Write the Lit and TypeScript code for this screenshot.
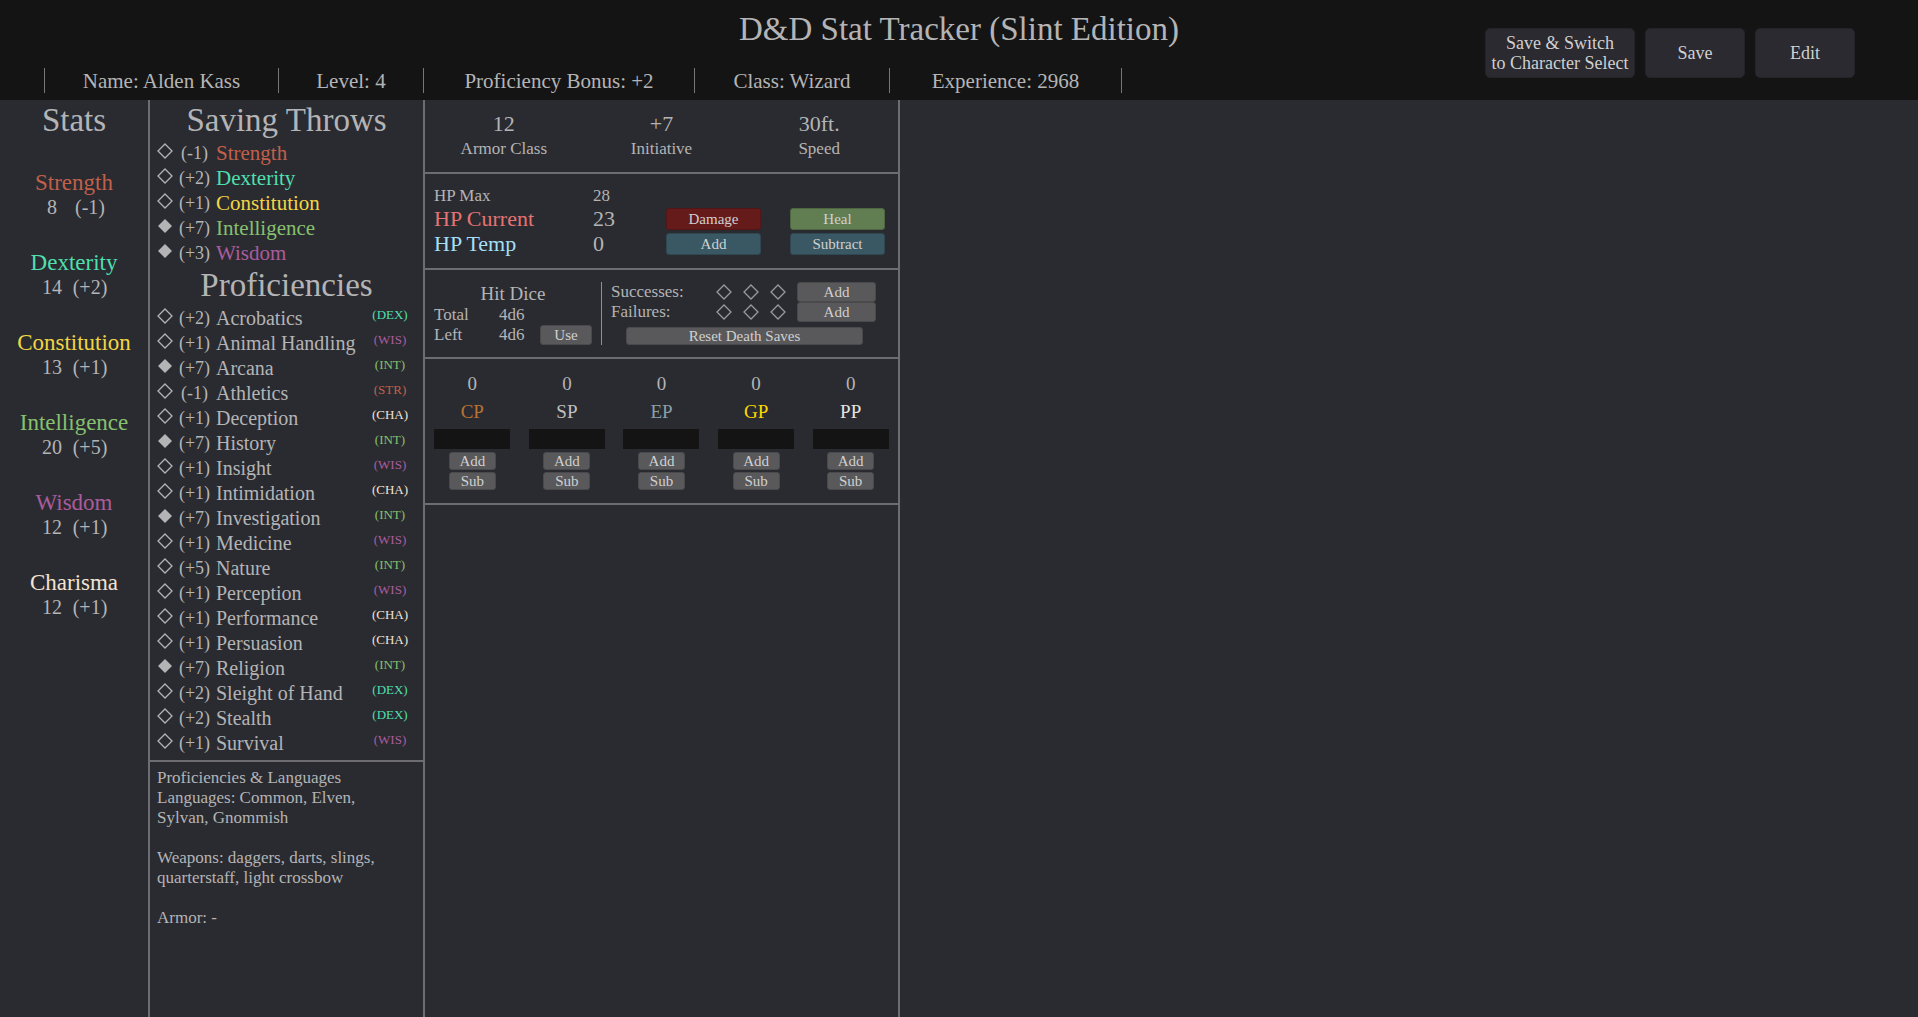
import { LitElement, html, svg, css } from "lit";
import { customElement, property } from "lit/decorators.js";

type Ability = "str" | "dex" | "con" | "int" | "wis" | "cha";

interface Stat {
  name: string;
  key: Ability;
  score: number;
  mod: string;
}

interface Check {
  name: string;
  key: Ability;
  mod: string;
  proficient?: boolean;
}

const STATS: Stat[] = [
  { name: "Strength", key: "str", score: 8, mod: "-1" },
  { name: "Dexterity", key: "dex", score: 14, mod: "+2" },
  { name: "Constitution", key: "con", score: 13, mod: "+1" },
  { name: "Intelligence", key: "int", score: 20, mod: "+5" },
  { name: "Wisdom", key: "wis", score: 12, mod: "+1" },
  { name: "Charisma", key: "cha", score: 12, mod: "+1" },
];

const SAVES: Check[] = [
  { name: "Strength", key: "str", mod: "-1" },
  { name: "Dexterity", key: "dex", mod: "+2" },
  { name: "Constitution", key: "con", mod: "+1" },
  { name: "Intelligence", key: "int", mod: "+7", proficient: true },
  { name: "Wisdom", key: "wis", mod: "+3", proficient: true },
];

const SKILLS: Check[] = [
  { name: "Acrobatics", key: "dex", mod: "+2" },
  { name: "Animal Handling", key: "wis", mod: "+1" },
  { name: "Arcana", key: "int", mod: "+7", proficient: true },
  { name: "Athletics", key: "str", mod: "-1" },
  { name: "Deception", key: "cha", mod: "+1" },
  { name: "History", key: "int", mod: "+7", proficient: true },
  { name: "Insight", key: "wis", mod: "+1" },
  { name: "Intimidation", key: "cha", mod: "+1" },
  { name: "Investigation", key: "int", mod: "+7", proficient: true },
  { name: "Medicine", key: "wis", mod: "+1" },
  { name: "Nature", key: "int", mod: "+5" },
  { name: "Perception", key: "wis", mod: "+1" },
  { name: "Performance", key: "cha", mod: "+1" },
  { name: "Persuasion", key: "cha", mod: "+1" },
  { name: "Religion", key: "int", mod: "+7", proficient: true },
  { name: "Sleight of Hand", key: "dex", mod: "+2" },
  { name: "Stealth", key: "dex", mod: "+2" },
  { name: "Survival", key: "wis", mod: "+1" },
];

const COINS = ["CP", "SP", "EP", "GP", "PP"];

const NOTES = `Proficiencies & Languages
Languages: Common, Elven,
Sylvan, Gnommish

Weapons: daggers, darts, slings,
quarterstaff, light crossbow

Armor: -`;

const diamond = (filled: boolean) => html`<svg
  class="diamond"
  width="16"
  height="16"
  viewBox="0 0 16 16"
  aria-hidden="true"
>
  ${filled
    ? svg`<path d="M8 1 L15 8 L8 15 L1 8 Z" fill="currentColor" />`
    : svg`<path d="M8 1 L15 8 L8 15 L1 8 Z" fill="none" stroke="currentColor" stroke-width="1.3" />`}
</svg>`;

const shared = css`
  * {
    box-sizing: border-box;
  }
  h1,
  h2,
  h3,
  p,
  ul {
    margin: 0;
    padding: 0;
    font-weight: 400;
    list-style: none;
  }
  button {
    padding: 0;
    border: 1px solid #4a4a4c;
    border-radius: 3px;
    background: #59595b;
    color: #d0d0d0;
    font-family: inherit;
    font-size: 15px;
    line-height: 16px;
  }
  .str { color: #c1604b; }
  .dex { color: #4fdfae; }
  .con { color: #f2d544; }
  .int { color: #86c06f; }
  .wis { color: #ab5c9d; }
  .cha { color: #f3e3d3; }
  .heading {
    font-size: 33px;
    line-height: 40px;
    text-align: center;
  }
  .diamond {
    display: block;
  }
`;

@customElement("sheet-header")
class SheetHeader extends LitElement {
  static styles = [
    shared,
    css`
      :host {
        display: grid;
        grid-template-columns: 1fr auto 1fr;
        grid-template-rows: 60px 40px;
        background: #141414;
      }
      .title {
        grid-column: 2;
        grid-row: 1;
        font-size: 33px;
        line-height: 58px;
      }
      .facts {
        grid-column: 1 / 4;
        grid-row: 2;
        display: grid;
        grid-template-columns: 234px 145px 271px 195px 233px;
        align-self: center;
        margin-left: 44px;
        font-size: 21px;
        line-height: 26px;
      }
      .fact {
        height: 25px;
        border-left: 1px solid #77777a;
        text-align: center;
      }
      .fact:last-child {
        border-right: 1px solid #77777a;
      }
      .actions {
        grid-column: 3;
        grid-row: 1 / 3;
        display: flex;
        justify-content: flex-end;
        gap: 10px;
        padding: 28px 63px 22px 0;
      }
      .action {
        width: 100px;
        border-color: #242428;
        border-radius: 5px;
        background: #2a2a30;
        font-size: 18px;
        line-height: 20px;
      }
      .wide {
        width: 150px;
      }
    `,
  ];

  render() {
    return html`
      <h1 class="title">D&amp;D Stat Tracker (Slint Edition)</h1>
      <ul class="facts">
        <li class="fact">Name: Alden Kass</li>
        <li class="fact">Level: 4</li>
        <li class="fact">Proficiency Bonus: +2</li>
        <li class="fact">Class: Wizard</li>
        <li class="fact">Experience: 2968</li>
      </ul>
      <div class="actions">
        <button class="action wide">Save &amp; Switch<br />to Character Select</button>
        <button class="action">Save</button>
        <button class="action">Edit</button>
      </div>
    `;
  }
}

@customElement("stat-list")
class StatList extends LitElement {
  static styles = [
    shared,
    css`
      :host {
        display: block;
      }
      .stats {
        display: grid;
        gap: 30px;
        padding-top: 30px;
        font-size: 23px;
        line-height: 25px;
        text-align: center;
      }
      .values {
        display: grid;
        grid-template-columns: 38px 38px;
        justify-content: center;
        padding-right: 6px;
        font-size: 20px;
      }
    `,
  ];

  render() {
    return html`
      <h2 class="heading">Stats</h2>
      <ul class="stats">
        ${STATS.map(
          (s) => html`<li>
            <div class=${s.key}>${s.name}</div>
            <div class="values"><span>${s.score}</span><span>(${s.mod})</span></div>
          </li>`,
        )}
      </ul>
    `;
  }
}

@customElement("check-list")
class CheckList extends LitElement {
  @property() heading = "";
  @property({ attribute: false }) checks: Check[] = [];
  @property({ type: Boolean }) tagged = false;

  static styles = [
    shared,
    css`
      :host {
        display: block;
      }
      .row {
        display: grid;
        grid-template-columns: 16px 43px 1fr 56px;
        align-items: center;
        height: 25px;
        padding: 0 5px 0 7px;
        font-size: 20px;
        line-height: 24px;
      }
      .diamond {
        margin-bottom: 4px;
      }
      .mod {
        font-size: 18px;
        text-align: center;
      }
      .save {
        font-size: 21px;
      }
      .tag {
        font-size: 13px;
        line-height: 20px;
        padding-bottom: 5px;
        text-align: center;
      }
    `,
  ];

  render() {
    return html`
      <h2 class="heading">${this.heading}</h2>
      <ul>
        ${this.checks.map(
          (c) => html`<li class="row">
            ${diamond(!!c.proficient)}
            <span class="mod">(${c.mod})</span>
            <span class=${this.tagged ? "name" : `save ${c.key}`}>${c.name}</span>
            ${this.tagged
              ? html`<span class="tag ${c.key}">(${c.key.toUpperCase()})</span>`
              : null}
          </li>`,
        )}
      </ul>
    `;
  }
}

@customElement("combat-panel")
class CombatPanel extends LitElement {
  static styles = [
    shared,
    css`
      :host {
        display: block;
      }
      .section {
        border-bottom: 2px solid #6d6d71;
      }
      .summary {
        display: grid;
        grid-template-columns: repeat(3, 1fr);
        padding: 11px 0;
        text-align: center;
        font-size: 17px;
        line-height: 25px;
      }
      .figure {
        font-size: 22px;
      }
      .hp {
        display: grid;
        grid-template-columns: 159px 73px 95px 95px;
        grid-template-rows: 20px 25px 25px;
        align-items: center;
        padding: 12px 0 12px 9px;
        font-size: 22px;
      }
      .small {
        font-size: 17px;
      }
      .current { color: #e57373; }
      .temp { color: #a5dff5; }
      .hp button {
        height: 22px;
      }
      .second {
        margin-left: 29px;
        width: 95px;
      }
      .hp .damage {
        background: #661b1b;
        border-color: #521616;
      }
      .hp .heal {
        background: #617d52;
        border-color: #4d6640;
      }
      .hp .adjust {
        background: #3a5863;
        border-color: #2e4750;
      }
      .rest {
        display: grid;
        grid-template-columns: 176px 1fr;
        padding: 12px 0;
        font-size: 17px;
        line-height: 20px;
      }
      .dice {
        display: grid;
        grid-template-columns: 65px 41px 52px;
        grid-template-rows: 23px 20px 20px;
        align-items: center;
        padding-left: 9px;
      }
      .dice-title {
        grid-column: 1 / 4;
        font-size: 19px;
        text-align: center;
      }
      .left-button {
        grid-column: 3;
        height: 20px;
      }
      .death {
        border-left: 1px solid #909093;
        padding-left: 9px;
      }
      .track {
        display: grid;
        grid-template-columns: 105px 27px 27px 27px 79px;
        height: 20px;
        align-items: center;
      }
      .track button {
        height: 20px;
      }
      .track .diamond {
        color: #9a9a9d;
      }
      .reset {
        display: block;
        width: 237px;
        height: 18px;
        margin: 5px 0 0 15px;
      }
      .coins {
        display: grid;
        grid-template-columns: repeat(5, 1fr);
        padding: 11px 0;
      }
      .coin {
        display: flex;
        flex-direction: column;
        align-items: center;
        font-size: 19px;
        line-height: 28px;
      }
      .coin input {
        width: 76px;
        height: 20px;
        margin: 3px 0;
        padding: 0 4px;
        border: 0;
        background: #141414;
        color: inherit;
        font-family: inherit;
        font-size: 15px;
      }
      .coin button {
        width: 47px;
        height: 18px;
        margin-bottom: 2px;
      }
      .cp { color: #b87333; }
      .sp { color: #c0c0c0; }
      .ep { color: #88a0ab; }
      .gp { color: #ffd700; }
      .pp { color: #e5e4e2; }
    `,
  ];

  private track(label: string) {
    return html`<div class="track">
      <span>${label}:</span>
      ${[0, 1, 2].map(() => diamond(false))}
      <button>Add</button>
    </div>`;
  }

  render() {
    return html`
      <section class="section summary">
        <div><div class="figure">12</div>Armor Class</div>
        <div><div class="figure">+7</div>Initiative</div>
        <div><div class="figure">30ft.</div>Speed</div>
      </section>
      <section class="section hp">
        <span class="small">HP Max</span>
        <span class="small">28</span>
        <span></span>
        <span></span>
        <span class="current">HP Current</span>
        <span>23</span>
        <button class="damage">Damage</button>
        <button class="second heal">Heal</button>
        <span class="temp">HP Temp</span>
        <span>0</span>
        <button class="adjust">Add</button>
        <button class="second adjust">Subtract</button>
      </section>
      <section class="section rest">
        <div class="dice">
          <h3 class="dice-title">Hit Dice</h3>
          <span>Total</span><span>4d6</span><span></span>
          <span>Left</span><span>4d6</span>
          <button class="left-button">Use</button>
        </div>
        <div class="death">
          ${this.track("Successes")} ${this.track("Failures")}
          <button class="reset">Reset Death Saves</button>
        </div>
      </section>
      <section class="section coins">
        ${COINS.map(
          (c) => html`<div class="coin">
            <span>0</span>
            <label class=${c.toLowerCase()} for=${c}>${c}</label>
            <input id=${c} type="text" inputmode="numeric" />
            <button>Add</button>
            <button>Sub</button>
          </div>`,
        )}
      </section>
    `;
  }
}

@customElement("app-root")
class AppRoot extends LitElement {
  static styles = [
    shared,
    css`
      :host {
        display: flex;
        flex-direction: column;
        min-height: 100vh;
        background: #2a2b30;
        color: #b4b4b6;
        font-family: "Liberation Serif", "Times New Roman", serif;
      }
      .sheet {
        flex: 1;
        display: grid;
        grid-template-columns: 148px 275px 475px 1fr;
      }
      .column {
        border-left: 2px solid #6d6d71;
      }
      .column:first-child {
        border-left: 0;
      }
      .notes {
        margin-top: 5px;
        padding: 6px 7px;
        border-top: 2px solid #6d6d71;
        font-size: 17px;
        line-height: 20px;
        white-space: pre-line;
      }
    `,
  ];

  render() {
    return html`
      <sheet-header></sheet-header>
      <main class="sheet">
        <div class="column"><stat-list></stat-list></div>
        <div class="column">
          <check-list heading="Saving Throws" .checks=${SAVES}></check-list>
          <check-list heading="Proficiencies" .checks=${SKILLS} tagged></check-list>
          <p class="notes">${NOTES}</p>
        </div>
        <div class="column"><combat-panel></combat-panel></div>
        <div class="column"></div>
      </main>
    `;
  }
}
